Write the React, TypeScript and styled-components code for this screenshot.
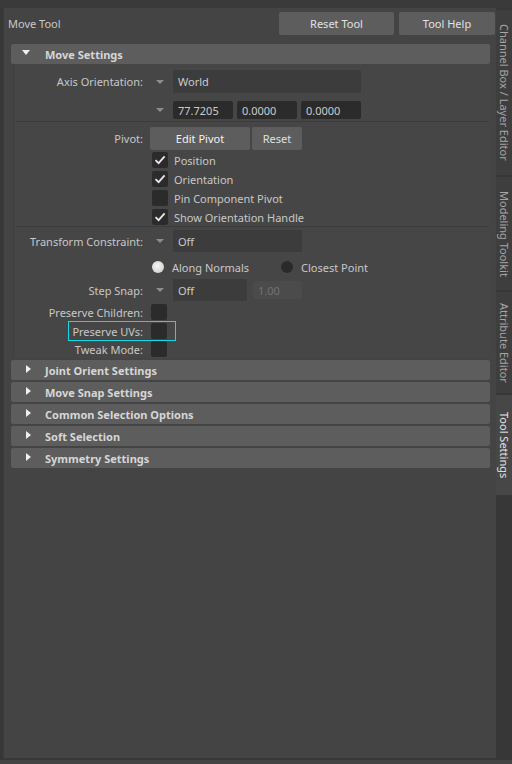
import React from "react";
import styled, { createGlobalStyle } from "styled-components";

const GlobalStyle = createGlobalStyle`
  html, body {
    margin: 0;
    padding: 0;
    background: #444444;
  }
  body {
    font-family: "Noto Sans", "Open Sans", sans-serif;
    font-size: 11px;
    color: #c8c8c8;
  }
`;

const Window = styled.div`
  width: 512px;
  height: 764px;
  display: flex;
  flex-direction: column;
  background: #444444;
  overflow: hidden;
`;

const TopStrip = styled.div`
  height: 8px;
  background: #3a3a3a;
  flex-shrink: 0;
`;

const Workspace = styled.div`
  height: 750px;
  display: flex;
  background: #373737;
  border-bottom: 2px solid #383838;
`;

const Panel = styled.div`
  flex: 1;
  margin-left: 2px;
  border-left: 2px solid #393939;
  background: #444444;
  display: flex;
  flex-direction: column;
  padding: 4px 1px 0 4px;
`;

const ToolHeader = styled.div`
  height: 23px;
  display: flex;
  align-items: center;
  gap: 5px;
`;

const ToolTitle = styled.div`
  flex: 1;
  color: #c8c8c8;
`;

const HeaderButton = styled.button<{ $w: number }>`
  width: ${(p) => p.$w}px;
  height: 23px;
  border: none;
  border-radius: 2px;
  background: #5d5d5d;
  color: #e2e2e2;
  font-family: inherit;
  font-size: 11px;
  padding: 0;
`;

const SectionList = styled.div`
  margin: 9px 5px 0 3px;
  display: flex;
  flex-direction: column;
  gap: 2px;
`;

const Section = styled.div`
  display: flex;
  flex-direction: column;
`;

const SectionHeader = styled.div`
  height: 20px;
  border-radius: 2px;
  background: #5d5d5d;
  display: flex;
  align-items: center;
  font-weight: bold;
  color: #d6d6d6;
`;

const CaretCell = styled.div`
  width: 34px;
  display: flex;
  align-items: center;
  justify-content: center;
  padding-bottom: 3px;
`;

const Caret = styled.span<{ $open: boolean }>`
  width: 0;
  height: 0;
  ${(p) =>
    p.$open
      ? `
    border-left: 4px solid transparent;
    border-right: 4px solid transparent;
    border-top: 5px solid #f0f0f0;
    margin-left: -4px;
  `
      : `
    border-top: 4px solid transparent;
    border-bottom: 4px solid transparent;
    border-left: 5px solid #f0f0f0;
  `}
`;

const SectionBody = styled.div`
  margin: 0 1px 0 2px;
  background: #464646;
  border-left: 1px solid #3e3e3e;
  padding: 6px 0 1px 0;
  display: flex;
  flex-direction: column;
`;

const FormRow = styled.div<{ $h: number; $mt?: number }>`
  position: relative;
  height: ${(p) => p.$h}px;
  margin-top: ${(p) => p.$mt ?? 0}px;
  display: grid;
  grid-template-columns: 129px 1fr;
  column-gap: 7px;
  align-items: center;
`;

const Label = styled.div`
  text-align: right;
  color: #c8c8c8;
  white-space: nowrap;
`;

const Controls = styled.div<{ $gap?: number }>`
  display: flex;
  align-items: center;
  gap: ${(p) => p.$gap ?? 0}px;
  height: 100%;
`;

const ArrowCell = styled.div`
  width: 20px;
  margin-right: 3px;
  display: flex;
  justify-content: center;
`;

const DropArrow = styled.span`
  width: 0;
  height: 0;
  border-left: 4px solid transparent;
  border-right: 4px solid transparent;
  border-top: 4px solid #8c8c8c;
`;

const Field = styled.div<{ $w: number; $h?: number; $tone?: "menu" | "input" | "off" }>`
  width: ${(p) => p.$w}px;
  height: ${(p) => p.$h ?? 23}px;
  box-sizing: border-box;
  border-radius: 2px;
  padding-left: 5px;
  display: flex;
  align-items: center;
  background: ${(p) =>
    p.$tone === "input" ? "#2b2b2b" : p.$tone === "off" ? "#4b4b4b" : "#3c3c3c"};
  color: ${(p) => (p.$tone === "off" ? "#717171" : "#cbcbcb")};
`;

const PivotButton = styled.button<{ $w: number; $strong?: boolean }>`
  width: ${(p) => p.$w}px;
  height: 23px;
  border: none;
  border-radius: 2px;
  background: #5d5d5d;
  color: ${(p) => (p.$strong ? "#f2f2f2" : "#e0e0e0")};
  font-family: inherit;
  font-size: 11px;
  padding: 0;
`;

const Divider = styled.div<{ $mt: number; $mb: number }>`
  height: 1px;
  background: #3b3b3b;
  margin: ${(p) => p.$mt}px 0 ${(p) => p.$mb}px 2px;
`;

const CheckLine = styled.div<{ $mt: number }>`
  height: 16px;
  margin-top: ${(p) => p.$mt}px;
  padding-left: 137px;
  display: flex;
  align-items: center;
  gap: 6px;
`;

const Box = styled.div`
  width: 16px;
  height: 16px;
  margin-left: 1px;
  border-radius: 2px;
  background: #2b2b2b;
  display: flex;
  align-items: center;
  justify-content: center;
  flex-shrink: 0;
`;

const Radio = styled.span<{ $on: boolean }>`
  width: 12px;
  height: 12px;
  border-radius: 50%;
  margin-left: 2px;
  margin-right: 8px;
  background: ${(p) =>
    p.$on ? "radial-gradient(circle at 45% 40%, #f4f4f4, #c9c9c9)" : "#2a2a2a"};
`;

const RadioText = styled.span<{ $gap?: number }>`
  margin-right: ${(p) => p.$gap ?? 0}px;
  color: #c8c8c8;
`;

const Highlight = styled.span`
  position: absolute;
  left: 54px;
  top: -2px;
  width: 108px;
  height: 20px;
  box-sizing: border-box;
  border: 1px solid #13d8e6;
  pointer-events: none;
`;

const TabBar = styled.div`
  width: 16px;
  padding-top: 2px;
  display: flex;
  flex-direction: column;
  gap: 2px;
  background: #373737;
`;

const Tab = styled.div<{ $h: number; $active?: boolean }>`
  height: ${(p) => p.$h}px;
  background: ${(p) => (p.$active ? "#474747" : "#3e3e3e")};
  display: flex;
  align-items: center;
  justify-content: center;
  writing-mode: vertical-rl;
  font-size: 11px;
  color: ${(p) => (p.$active ? "#e4e4e4" : "#a6a6a6")};
  white-space: nowrap;
  overflow: hidden;
`;

const Check = () => (
  <svg width="12" height="12" viewBox="0 0 12 12">
    <path d="M1.5 6.2 L4.6 9.2 L10.6 2.4" fill="none" stroke="#e8e8e8" strokeWidth="1.8" />
  </svg>
);

const CheckItem = ({ label, on, mt }: { label: string; on: boolean; mt: number }) => (
  <CheckLine $mt={mt}>
    <Box>{on && <Check />}</Box>
    <span>{label}</span>
  </CheckLine>
);

const collapsed = [
  "Joint Orient Settings",
  "Move Snap Settings",
  "Common Selection Options",
  "Soft Selection",
  "Symmetry Settings",
];

const tabs = [
  { name: "Channel Box / Layer Editor", h: 165 },
  { name: "Modeling Toolkit", h: 113 },
  { name: "Attribute Editor", h: 101 },
  { name: "Tool Settings", h: 100, active: true },
];

export default function App() {
  return (
    <Window>
      <GlobalStyle />
      <TopStrip />
      <Workspace>
        <Panel>
          <ToolHeader>
            <ToolTitle>Move Tool</ToolTitle>
            <HeaderButton $w={115}>Reset Tool</HeaderButton>
            <HeaderButton $w={96}>Tool Help</HeaderButton>
          </ToolHeader>

          <SectionList>
            <Section>
              <SectionHeader>
                <CaretCell>
                  <Caret $open />
                </CaretCell>
                Move Settings
              </SectionHeader>
              <SectionBody>
                <FormRow $h={23}>
                  <Label>Axis Orientation:</Label>
                  <Controls>
                    <ArrowCell>
                      <DropArrow />
                    </ArrowCell>
                    <Field $w={188}>World</Field>
                  </Controls>
                </FormRow>
                <FormRow $h={18} $mt={8}>
                  <span />
                  <Controls>
                    <ArrowCell>
                      <DropArrow />
                    </ArrowCell>
                    <Controls $gap={4}>
                      <Field $w={60} $h={18} $tone="input">77.7205</Field>
                      <Field $w={60} $h={18} $tone="input">0.0000</Field>
                      <Field $w={60} $h={18} $tone="input">0.0000</Field>
                    </Controls>
                  </Controls>
                </FormRow>

                <Divider $mt={2} $mb={5} />

                <FormRow $h={23}>
                  <Label>Pivot:</Label>
                  <Controls $gap={2}>
                    <PivotButton $w={100} $strong>Edit Pivot</PivotButton>
                    <PivotButton $w={50}>Reset</PivotButton>
                  </Controls>
                </FormRow>
                <CheckItem label="Position" on mt={2} />
                <CheckItem label="Orientation" on mt={3} />
                <CheckItem label="Pin Component Pivot" on={false} mt={3} />
                <CheckItem label="Show Orientation Handle" on mt={3} />

                <Divider $mt={1} $mb={3} />

                <FormRow $h={22}>
                  <Label>Transform Constraint:</Label>
                  <Controls>
                    <ArrowCell>
                      <DropArrow />
                    </ArrowCell>
                    <Field $w={129} $h={22}>Off</Field>
                  </Controls>
                </FormRow>
                <FormRow $h={24} $mt={3}>
                  <span />
                  <Controls>
                    <Radio $on />
                    <RadioText $gap={30}>Along Normals</RadioText>
                    <Radio $on={false} />
                    <RadioText>Closest Point</RadioText>
                  </Controls>
                </FormRow>
                <FormRow $h={22}>
                  <Label>Step Snap:</Label>
                  <Controls>
                    <ArrowCell>
                      <DropArrow />
                    </ArrowCell>
                    <Field $w={74} $h={22}>Off</Field>
                    <Field $w={49} $h={18} $tone="off" style={{ marginLeft: 6 }}>
                      1.00
                    </Field>
                  </Controls>
                </FormRow>
                <FormRow $h={16} $mt={3}>
                  <Label>Preserve Children:</Label>
                  <Controls>
                    <Box />
                  </Controls>
                </FormRow>
                <FormRow $h={16} $mt={3}>
                  <Label>Preserve UVs:</Label>
                  <Controls>
                    <Box />
                  </Controls>
                  <Highlight />
                </FormRow>
                <FormRow $h={16} $mt={2}>
                  <Label>Tweak Mode:</Label>
                  <Controls>
                    <Box />
                  </Controls>
                </FormRow>
              </SectionBody>
            </Section>

            {collapsed.map((title) => (
              <SectionHeader key={title}>
                <CaretCell>
                  <Caret $open={false} />
                </CaretCell>
                {title}
              </SectionHeader>
            ))}
          </SectionList>
        </Panel>

        <TabBar>
          {tabs.map((t) => (
            <Tab key={t.name} $h={t.h} $active={t.active}>
              {t.name}
            </Tab>
          ))}
        </TabBar>
      </Workspace>
    </Window>
  );
}
